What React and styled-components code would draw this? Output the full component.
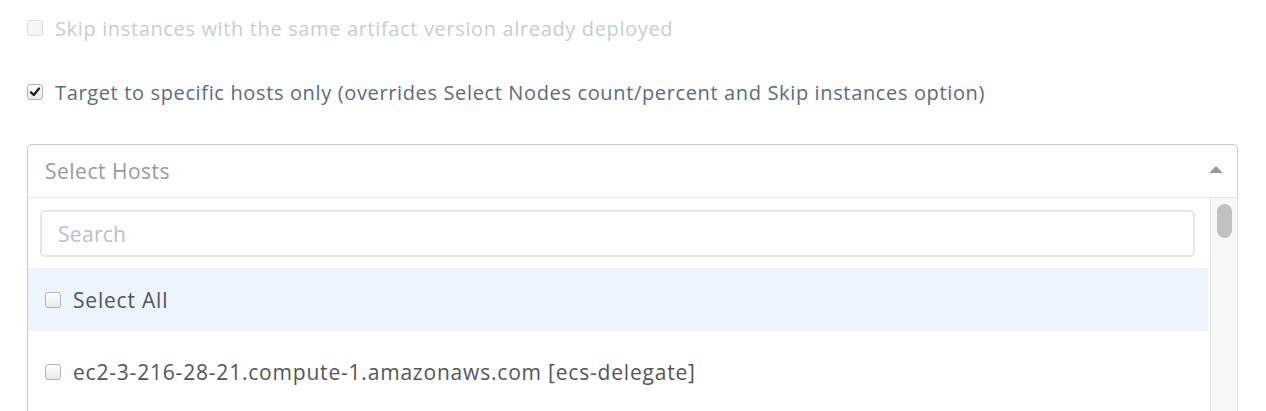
import React, { useState } from 'react';
import styled, { createGlobalStyle } from 'styled-components';

const GlobalStyle = createGlobalStyle`
  html, body {
    margin: 0;
    padding: 0;
    background: #fff;
  }
  body {
    font-family: 'Open Sans', 'Noto Sans', sans-serif;
  }
`;

const Page = styled.div`
  display: flex;
  flex-direction: column;
  padding: 17px 28px 0 27px;
  width: 1211px;
`;

const OptionRow = styled.label`
  display: flex;
  align-items: center;
  gap: 12px;
  height: 22px;
  margin-bottom: ${props => props.gap || 0}px;
  font-size: 20px;
  letter-spacing: 0.64px;
  color: ${props => (props.disabled ? '#c7cdd6' : '#5d6b80')};
`;

const Box = styled.span`
  flex: none;
  position: relative;
  width: 14px;
  height: 14px;
  border: 1px solid ${props => (props.disabled ? '#dcdcdc' : '#b3b3b3')};
  border-radius: 3px;
  background: ${props =>
    props.disabled ? '#f6f6f6' : 'linear-gradient(#fdfdfd, #e9e9e9)'};
  box-shadow: inset 0 1px 0 rgba(255, 255, 255, 0.8);
`;

const Tick = styled.svg`
  position: absolute;
  left: 1px;
  top: 1px;
`;

const CheckBox = ({ checked, disabled }) => (
  <Box disabled={disabled}>
    {checked && (
      <Tick width="12" height="12" viewBox="0 0 12 12">
        <path d="M2 6.3 L4.8 9 L10 2.6" fill="none" stroke="#222" strokeWidth="2.4" strokeLinecap="round" strokeLinejoin="round" />
      </Tick>
    )}
  </Box>
);

const Select = styled.div`
  display: flex;
  flex-direction: column;
`;

const Control = styled.div`
  display: flex;
  align-items: center;
  justify-content: space-between;
  height: 52px;
  padding: 0 14px 0 17px;
  border: 1px solid #cccccc;
  border-bottom: 1px solid #e6e6e6;
  border-radius: 5px 5px 0 0;
  font-size: 21px;
  letter-spacing: 0.5px;
  color: #9a9a9a;
`;

const Arrow = styled.span`
  width: 0;
  height: 0;
  border-left: 7px solid transparent;
  border-right: 7px solid transparent;
  border-bottom: 7px solid #999;
  margin-top: -3px;
`;

const Menu = styled.div`
  display: flex;
  height: 214px;
  border-left: 1px solid #cccccc;
`;

const MenuBody = styled.div`
  flex: 1;
  display: flex;
  flex-direction: column;
  padding: 12px 2px 0 0;
  gap: 9px;
`;

const SearchWrap = styled.div`
  padding: 0 13px 2px 12px;
`;

const SearchInput = styled.input`
  box-sizing: border-box;
  width: 100%;
  height: 47px;
  padding: 0 16px;
  border: 2px solid #e3e7ec;
  border-radius: 5px;
  font-family: inherit;
  font-size: 21px;
  letter-spacing: 0.3px;
  color: #555;
  outline: none;
  &::placeholder {
    color: #b9c1cc;
  }
`;

const Item = styled.div`
  display: flex;
  align-items: center;
  gap: 12px;
  height: 63px;
  flex: none;
  padding-left: 17px;
  font-size: 21px;
  letter-spacing: 0.8px;
  color: #555;
  background: ${props => (props.active ? '#ecf4fe' : '#fff')};
`;

const Scrollbar = styled.div`
  flex: none;
  width: 26px;
  background: #f8f8f8;
  border-left: 1px solid #e6e6e6;
  border-right: 1px solid #e6e6e6;
  padding-top: 6px;
  display: flex;
  justify-content: center;
`;

const Thumb = styled.div`
  width: 15px;
  height: 34px;
  border-radius: 8px;
  background: #c1c1c1;
`;

const hosts = ['ec2-3-216-28-21.compute-1.amazonaws.com [ecs-delegate]'];

const App = () => {
  const [query, setQuery] = useState('');

  return (
    <>
      <GlobalStyle />
      <Page>
        <OptionRow disabled gap={42}>
          <CheckBox disabled />
          Skip instances with the same artifact version already deployed
        </OptionRow>
        <OptionRow gap={41}>
          <CheckBox checked />
          Target to specific hosts only (overrides Select Nodes count/percent and Skip instances option)
        </OptionRow>
        <Select>
          <Control>
            Select Hosts
            <Arrow />
          </Control>
          <Menu>
            <MenuBody>
              <SearchWrap>
                <SearchInput
                  placeholder="Search"
                  value={query}
                  onChange={e => setQuery(e.target.value)}
                />
              </SearchWrap>
              <Item active>
                <CheckBox />
                Select All
              </Item>
              {hosts.map(h => (
                <Item key={h}>
                  <CheckBox />
                  {h}
                </Item>
              ))}
            </MenuBody>
            <Scrollbar>
              <Thumb />
            </Scrollbar>
          </Menu>
        </Select>
      </Page>
    </>
  );
};

export default App;
